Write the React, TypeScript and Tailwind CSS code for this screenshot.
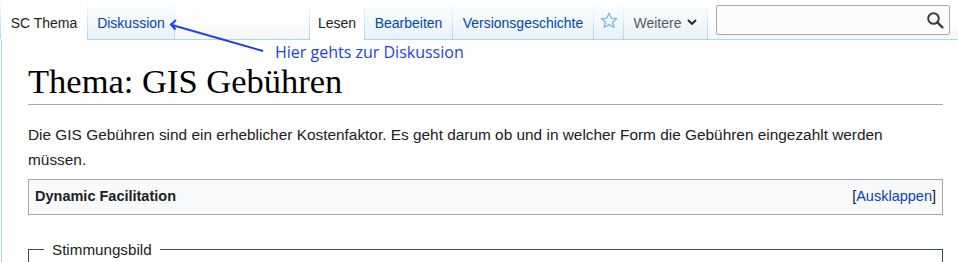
import React from 'react';

const sans = "font-['Liberation_Sans',Arial,sans-serif]";

function Sep() {
  return <div className="w-px h-[39px] shrink-0 bg-linear-to-b from-[#a7d7f9]/0 to-[#a7d7f9]" />;
}

function Tab({
  label,
  width,
  selected,
  link,
  children,
}: {
  label?: string;
  width: string;
  selected?: boolean;
  link?: boolean;
  children?: React.ReactNode;
}) {
  const base = `${width} shrink-0 flex justify-center pt-[15px] text-[14px] leading-[16px]`;
  const bg = selected
    ? 'relative z-10 h-[40px] bg-white text-[#202122]'
    : 'h-[39px] bg-linear-to-t from-[#e8f2f8] to-white';
  const color = selected ? '' : link ? 'text-[#0645ad]' : 'text-[#54595d]';
  return <div className={`${base} ${bg} ${color}`}>{children ?? label}</div>;
}

function StarIcon() {
  return (
    <svg width="18" height="17" viewBox="0 0 18 17" className="mt-[-3px]">
      <path
        d="M9 1.2 L11.3 6.2 L16.7 6.6 L12.6 10.1 L13.9 15.5 L9 12.6 L4.1 15.5 L5.4 10.1 L1.3 6.6 L6.7 6.2 Z"
        fill="none"
        stroke="#7ab8e8"
        strokeWidth="1.3"
        strokeLinejoin="round"
      />
    </svg>
  );
}

function Chevron() {
  return (
    <svg width="10" height="7" viewBox="0 0 10 7" className="ml-[6px] mt-[4px]">
      <polyline points="1,1 5,5 9,1" fill="none" stroke="#222" strokeWidth="1.9" />
    </svg>
  );
}

function SearchIcon() {
  return (
    <svg width="18" height="18" viewBox="0 0 18 18">
      <circle cx="7.5" cy="7.5" r="5.3" fill="none" stroke="#3c3c3c" strokeWidth="2" />
      <line x1="11.4" y1="11.4" x2="16.4" y2="16.4" stroke="#3c3c3c" strokeWidth="2.3" strokeLinecap="round" />
    </svg>
  );
}

export default function App() {
  return (
    <div className={`relative w-[958px] h-[262px] overflow-hidden bg-white ${sans}`}>
      {/* head: namespaces left, views + search right */}
      <div className="flex items-start h-[39px] bg-linear-to-b from-white from-50% to-[#f6f6f6]">
        <Sep />
        <Tab label="SC Thema" width="w-[86px]" selected />
        <Sep />
        <Tab label="Diskussion" width="w-[86px]" link />
        <Sep />

        <div className="ml-auto flex items-start">
          <Sep />
          <Tab label="Lesen" width="w-[54px]" selected />
          <Sep />
          <Tab label="Bearbeiten" width="w-[87px]" link />
          <Sep />
          <Tab label="Versionsgeschichte" width="w-[140px]" link />
          <Sep />
          <Tab width="w-[29px]">
            <StarIcon />
          </Tab>
          <Sep />
          <Tab width="w-[83px]">
            <span>Weitere</span>
            <Chevron />
          </Tab>
          <Sep />
        </div>

        <div className="ml-[8px] mr-[8px] mt-[5px] w-[234px] h-[30px] flex items-center border border-[#a2a9b1] rounded-[2px] bg-[#fcfcfc]">
          <input className="flex-1 min-w-0 bg-transparent outline-none px-2 text-[14px]" />
          <div className="mr-[5px] flex">
            <SearchIcon />
          </div>
        </div>
      </div>

      {/* content */}
      <div className="ml-px border-l border-t border-[#a7d7f9] pl-[26px] pr-[15px] pt-[19px] text-[#202122]">
        <h1 className="font-['Liberation_Serif','Times_New_Roman',serif] text-[34.5px] leading-[1.3] text-black border-b border-[#a2a9b1]">
          Thema: GIS Gebühren
        </h1>
        <p className="mt-[17px] text-[15.4px] leading-[25px]">
          Die GIS Gebühren sind ein erheblicher Kostenfaktor. Es geht darum ob und in welcher Form die Gebühren eingezahlt werden
          <br />
          müssen.
        </p>
        <div className="mt-[7px] h-[36px] flex items-center justify-between border border-[#a2a9b1] bg-[#f8f9fa] px-[6px] text-[14.5px]">
          <span className="font-bold">Dynamic Facilitation</span>
          <span>
            [<span className="text-[#0645ad]">Ausklappen</span>]
          </span>
        </div>
        <fieldset className="mt-[22px] border border-[#2a4b8d] px-[15px] h-[60px]">
          <legend className="px-[8px] text-[15.2px] leading-[26px]">Stimmungsbild</legend>
        </fieldset>
      </div>

      {/* annotation drawn over the page */}
      <svg className="absolute left-0 top-0 pointer-events-none" width="958" height="262">
        <line x1="263" y1="51" x2="172" y2="25" stroke="#1d3ef2" strokeWidth="2" />
        <polyline points="176,20 171,24.5 175.5,29.5" fill="none" stroke="#1d3ef2" strokeWidth="2" />
      </svg>
      <div className="absolute left-[275px] top-[44px] font-['Open_Sans',sans-serif] text-[16px] leading-4 text-[#1d3ef2] whitespace-nowrap">
        Hier gehts zur Diskussion
      </div>
    </div>
  );
}
